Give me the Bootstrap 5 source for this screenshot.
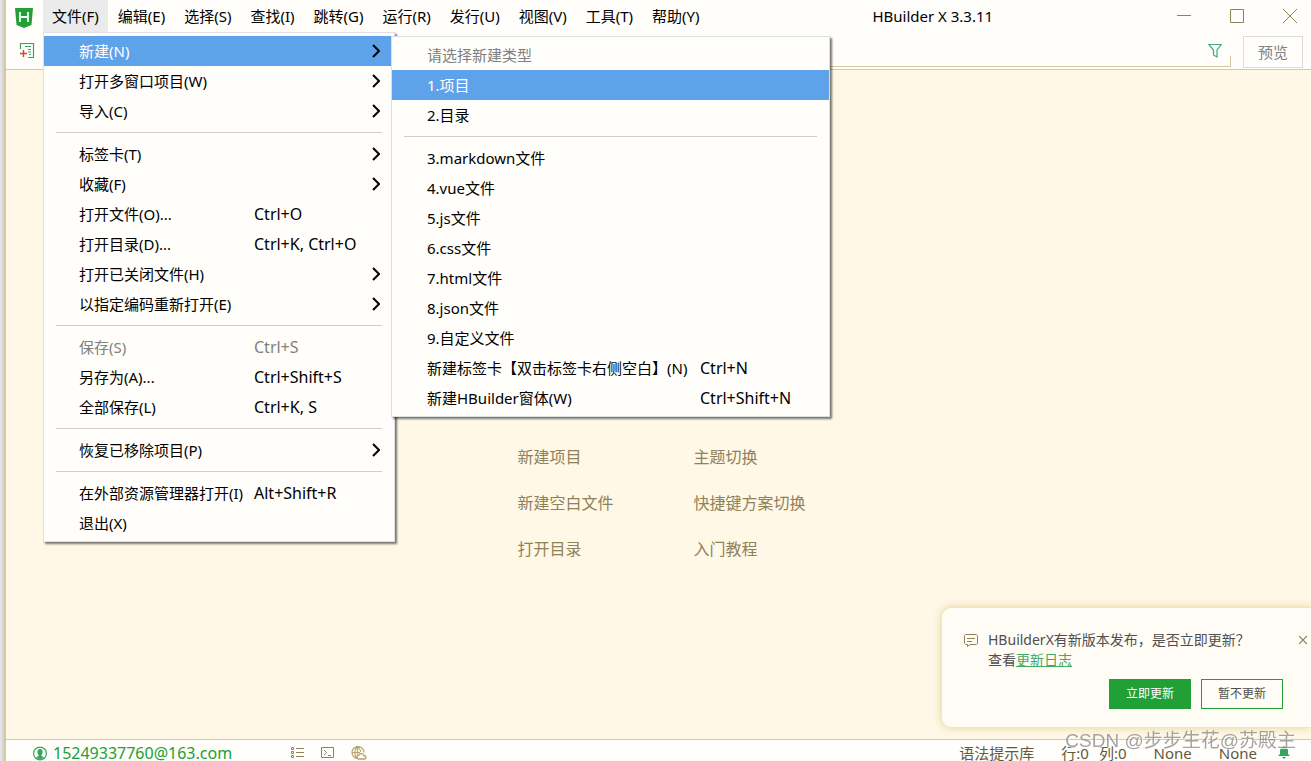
<!DOCTYPE html>
<html lang="zh-CN">
<head>
<meta charset="utf-8">
<meta name="viewport" content="width=device-width, initial-scale=1">
<title>HBuilder X 3.3.11</title>
<link href="https://cdn.jsdelivr.net/npm/bootstrap@5.3.0/dist/css/bootstrap.min.css" rel="stylesheet">
<style>
:root{--paper:#fffefa;--canvas:#fff8e7;--tan:#d5c9a0;--olive:#8f8158;--green:#20a036;--blue:#5ea2ea}
body{font-family:"Noto Sans","Noto Sans CJK SC",sans-serif;font-size:15px;line-height:20px;color:#000;background:var(--canvas)}
button{font-family:inherit}
.app-window{border-left:2px solid var(--tan)}
.desk-edge{width:4px;background:linear-gradient(90deg,#e9e9eb,#cfcfd2)}
.titlebar{height:33px;background:var(--paper)}
.logo-slot{width:37px;padding-left:9px}
.menu-row{gap:1px}
.menu-top{height:32px;padding:0 9px;border:0;background:none;color:#000;white-space:nowrap}
.menu-top.open{background:#ebebeb}
.caption{font-size:15px;line-height:32px}
.win-controls{margin-right:-5px}
.win-btn{width:53px;height:32px;border:0;background:none;padding:0 0 3px}
.toolbar{height:37px;background:var(--paper);border-bottom:1px solid var(--tan)}
.new-file{margin:10px 0 0 14px;overflow:visible}
.path-box{height:34px;border-bottom:1px solid var(--tan)}
.path-box::after{content:"";align-self:flex-end;width:1px;height:10px;background:var(--tan)}
.path-box input{border:0;background:none;outline:0;min-width:0}
.preview-btn{width:60px;height:32px;margin:3px 8px 0 12px;border:1px solid #dcdcdc;background:var(--paper);color:#808080;padding:0}
.popup{background:var(--paper);border:1px solid #dcdfe3;border-radius:0;padding:3px 0;margin:0;display:block;--bs-dropdown-min-width:0;font-size:15px;box-shadow:2px 2px 2px #0008}
.file-menu{top:32px;left:0;width:352px}
.new-menu{top:3px;left:347px;width:439px}
.popup .dropdown-item{height:30px;padding:0 0 0 35px;color:#000;line-height:30px;display:flex}
.popup .dropdown-item.active{background:var(--blue);color:#fff}
.popup .dropdown-item:disabled{color:#808080}
.popup .label-col{width:175px}
.popup .label-col+span{font-size:16px}
.new-menu .label-col{width:273px}
.popup .chev{margin:8px 14px 0 auto}
.popup .dropdown-divider{margin:6px 12px;border-top:1px solid #cfcfcf;opacity:1}
.start-area{padding-top:196px}
.start-grid{display:grid;grid-template-columns:176px 106px;grid-auto-rows:46px;align-items:center;white-space:nowrap;font-size:16px}
.start-grid a{color:var(--olive);text-decoration:none}
.notice{right:0;bottom:11px;width:370px;padding:22px 0 18px 22px;background:#fffcf5;border:1px solid #f1e5c0;border-right:0;border-radius:10px 0 0 10px;box-shadow:0 0 8px #e5d49a;font-size:14px;color:#4f4f4f}
.notice a{color:#41ab64}
.notice-text{padding-left:10px}
.notice-actions{gap:10px;margin-top:9px;padding-right:28px}
.notice .act{width:82px;height:30px;border:1px solid var(--green);border-radius:0;font-size:12px;padding:0}
.notice .act-main{background:var(--green);color:#fff}
.notice .act-alt{background:none;color:#4f4f4f}
.statusbar{height:22px;border-top:1px solid var(--tan);background:var(--paper);line-height:26px;color:#625a40}
.statusbar svg{margin-top:6px;flex:none}
.account{width:258px;margin-left:27px;gap:6px;font-size:16px;color:var(--green);text-decoration:none}
.panel-icons{gap:17px}
.status-info{gap:27px;padding-right:21px}
.status-info .bell{margin-left:-6px}
.cursor-pos{gap:10px}
.stamp{right:15px;bottom:4px;font-family:"Liberation Sans","Noto Sans CJK SC",sans-serif;font-size:19px;line-height:32px;color:#777a;text-shadow:1px 1px #fffc;pointer-events:none}
</style>
</head>
<body>
<div class="d-flex vh-100 overflow-hidden">
  <div class="desk-edge flex-shrink-0"></div>
  <div class="app-window d-flex flex-column flex-grow-1">
    <header class="titlebar d-flex align-items-start flex-shrink-0">
      <div class="logo-slot pt-2">
        <svg width="18" height="20" viewBox="0 0 18 20" class="d-block"><path d="M0 0h18l-1.500 17L9 20l-7.500-3z" fill="#20a036"/><path d="M5 4v10M13 4v10M5 9h8" stroke="#eef9ee" stroke-width="2" fill="none"/></svg>
      </div>
      <nav class="menu-row d-flex position-relative">
        <button class="menu-top open" type="button">文件(F)</button>
        <button class="menu-top" type="button">编辑(E)</button>
        <button class="menu-top" type="button">选择(S)</button>
        <button class="menu-top" type="button">查找(I)</button>
        <button class="menu-top" type="button">跳转(G)</button>
        <button class="menu-top" type="button">运行(R)</button>
        <button class="menu-top" type="button">发行(U)</button>
        <button class="menu-top" type="button">视图(V)</button>
        <button class="menu-top" type="button">工具(T)</button>
        <button class="menu-top" type="button">帮助(Y)</button>
        <div class="dropdown-menu popup file-menu">
          <button class="dropdown-item active" type="button"><span class="label-col">新建(N)</span><svg class="chev" width="8" height="14"><path d="M1 1l6 6-6 6" fill="none" stroke="#000" stroke-width="2"/></svg></button>
          <button class="dropdown-item" type="button"><span class="label-col">打开多窗口项目(W)</span><svg class="chev" width="8" height="14"><path d="M1 1l6 6-6 6" fill="none" stroke="#000" stroke-width="2"/></svg></button>
          <button class="dropdown-item" type="button"><span class="label-col">导入(C)</span><svg class="chev" width="8" height="14"><path d="M1 1l6 6-6 6" fill="none" stroke="#000" stroke-width="2"/></svg></button>
          <hr class="dropdown-divider">
          <button class="dropdown-item" type="button"><span class="label-col">标签卡(T)</span><svg class="chev" width="8" height="14"><path d="M1 1l6 6-6 6" fill="none" stroke="#000" stroke-width="2"/></svg></button>
          <button class="dropdown-item" type="button"><span class="label-col">收藏(F)</span><svg class="chev" width="8" height="14"><path d="M1 1l6 6-6 6" fill="none" stroke="#000" stroke-width="2"/></svg></button>
          <button class="dropdown-item" type="button"><span class="label-col">打开文件(O)...</span><span>Ctrl+O</span></button>
          <button class="dropdown-item" type="button"><span class="label-col">打开目录(D)...</span><span>Ctrl+K, Ctrl+O</span></button>
          <button class="dropdown-item" type="button"><span class="label-col">打开已关闭文件(H)</span><svg class="chev" width="8" height="14"><path d="M1 1l6 6-6 6" fill="none" stroke="#000" stroke-width="2"/></svg></button>
          <button class="dropdown-item" type="button"><span class="label-col">以指定编码重新打开(E)</span><svg class="chev" width="8" height="14"><path d="M1 1l6 6-6 6" fill="none" stroke="#000" stroke-width="2"/></svg></button>
          <hr class="dropdown-divider">
          <button class="dropdown-item" type="button" disabled><span class="label-col">保存(S)</span><span>Ctrl+S</span></button>
          <button class="dropdown-item" type="button"><span class="label-col">另存为(A)...</span><span>Ctrl+Shift+S</span></button>
          <button class="dropdown-item" type="button"><span class="label-col">全部保存(L)</span><span>Ctrl+K, S</span></button>
          <hr class="dropdown-divider">
          <button class="dropdown-item" type="button"><span class="label-col">恢复已移除项目(P)</span><svg class="chev" width="8" height="14"><path d="M1 1l6 6-6 6" fill="none" stroke="#000" stroke-width="2"/></svg></button>
          <hr class="dropdown-divider">
          <button class="dropdown-item" type="button"><span class="label-col">在外部资源管理器打开(I)</span><span>Alt+Shift+R</span></button>
          <button class="dropdown-item" type="button"><span class="label-col">退出(X)</span></button>
          <div class="dropdown-menu popup new-menu">
            <button class="dropdown-item" type="button" disabled>请选择新建类型</button>
            <button class="dropdown-item active" type="button">1.项目</button>
            <button class="dropdown-item" type="button">2.目录</button>
            <hr class="dropdown-divider">
            <button class="dropdown-item" type="button">3.markdown文件</button>
            <button class="dropdown-item" type="button">4.vue文件</button>
            <button class="dropdown-item" type="button">5.js文件</button>
            <button class="dropdown-item" type="button">6.css文件</button>
            <button class="dropdown-item" type="button">7.html文件</button>
            <button class="dropdown-item" type="button">8.json文件</button>
            <button class="dropdown-item" type="button">9.自定义文件</button>
            <button class="dropdown-item" type="button"><span class="label-col">新建标签卡【双击标签卡右侧空白】(N)</span><span>Ctrl+N</span></button>
            <button class="dropdown-item" type="button"><span class="label-col">新建HBuilder窗体(W)</span><span>Ctrl+Shift+N</span></button>
          </div>
        </div>
      </nav>
      <div class="caption flex-grow-1 text-center">HBuilder X 3.3.11</div>
      <div class="win-controls d-flex">
        <button class="win-btn" type="button" aria-label="最小化"><svg width="14" height="14"><path d="M0 6.500h14" stroke="#8f8158"/></svg></button>
        <button class="win-btn" type="button" aria-label="最大化"><svg width="14" height="14"><path d="M.5.5h13v13H.5z" fill="none" stroke="#8f8158"/></svg></button>
        <button class="win-btn" type="button" aria-label="关闭"><svg width="14" height="14"><path d="M0 0l14 14M14 0L0 14" stroke="#8f8158"/></svg></button>
      </div>
    </header>
    <div class="toolbar d-flex flex-shrink-0">
      <svg class="new-file flex-shrink-0" width="15" height="15"><path d="M.5 6V.5h13v14H8" fill="none" stroke="#3aa45f" stroke-width="1.200"/><path d="M5 3.500h6M8 6.500h3M8 9h3M9 11.500h2" stroke="#3aa45f" stroke-width="1.200"/><path d="M0 10.500h7M3.500 7v7" stroke="#dc4030" stroke-width="1.400"/></svg>
      <div class="path-box d-flex flex-grow-1 ms-2">
        <input class="flex-grow-1" type="text" aria-label="搜索文件">
        <svg class="mt-2 me-2" width="14" height="20"><path d="M.7 3.500h12.600L9 9v7L5.500 14V9z" fill="none" stroke="#35ad83" stroke-width="1.200"/></svg>
      </div>
      <button class="preview-btn flex-shrink-0" type="button">预览</button>
    </div>
    <main class="flex-grow-1 position-relative">
      <div class="start-area d-flex justify-content-center align-items-center h-100">
        <div class="start-grid">
          <a href="#">新建项目</a><a href="#">主题切换</a>
          <a href="#">新建空白文件</a><a href="#">快捷键方案切换</a>
          <a href="#">打开目录</a><a href="#">入门教程</a>
        </div>
      </div>
      <section class="notice position-absolute">
        <div class="d-flex">
          <svg class="mt-1" width="14" height="13"><path d="M1.500.5h11l1 1v8l-1 1H6L3.500 12.500v-2h-2l-1-1v-8zM3 4.500h8M3 7.500h5" fill="none" stroke="#8f8158"/></svg>
          <div class="notice-text flex-grow-1">HBuilderX有新版本发布，是否立即更新？<br>查看<a href="#">更新日志</a></div>
          <button class="border-0 bg-transparent p-0 align-self-start me-1" type="button" aria-label="关闭通知"><svg class="d-block mt-1" width="8" height="12"><path d="M0 2l8 8M8 2l-8 8" stroke="#8f8158" stroke-width="1.200"/></svg></button>
        </div>
        <div class="notice-actions d-flex justify-content-end">
          <button class="act act-main" type="button">立即更新</button>
          <button class="act act-alt" type="button">暂不更新</button>
        </div>
      </section>
    </main>
    <footer class="statusbar d-flex overflow-hidden flex-shrink-0">
      <a class="account d-flex" href="#"><svg width="14" height="15" viewBox="0 0 14 15"><circle cx="7" cy="7.500" r="6.400" fill="none" stroke="#36a55b" stroke-width="1.200"/><ellipse cx="7" cy="6" rx="2.600" ry="3" fill="#36a55b"/><path d="M5.500 7h3v3l2.500 1.500a6 6 0 0 1-8 0L5.500 10z" fill="#36a55b"/></svg><span>15249337760@163.com</span></a>
      <div class="panel-icons d-flex">
        <svg width="13" height="15"><path d="M.5 1.500h2v2h-2zM.5 5.500h2v2h-2zM.5 9.500h2v2h-2zM5 2.500h8M5 6.500h8M5 10.500h8" fill="none" stroke="#8f8158"/></svg>
        <svg width="13" height="15"><path d="M.5 1.500h12v10H.5zM3 4l2.500 2.500L3 9M7 9.500h3" fill="none" stroke="#8f8158"/></svg>
        <svg width="16" height="15"><path d="M7 12.500a6 6 0 1 1 6-6M1 6.500h8M6.500.5v8M6.500.5C3 4 3 9 6 12.500M6.500.5Q10 3 9.500 6" fill="none" stroke="#b8a270" stroke-width="1.200"/><path d="M8 13a2 2 0 0 1 0-4 2.800 2.800 0 0 1 5.200.8 1.600 1.600 0 0 1 .3 3.200z" fill="#fffefa" stroke="#b8a270" stroke-width="1.400"/></svg>
      </div>
      <div class="status-info d-flex ms-auto"><span>语法提示库</span><span class="cursor-pos d-flex"><span>行:0</span><span>列:0</span></span><span>None</span><span>None</span><svg class="bell" width="12" height="14"><path d="M6 0l1 1c2 .5 3 2 3 4v3l2 2H0l2-2V5c0-2 1-3.500 3-4zM4 11h4L6 13z" fill="#36a55b"/></svg></div>
    </footer>
  </div>
</div>
<div class="stamp position-fixed">CSDN @步步生花@苏殿主</div>
<script src="https://cdn.jsdelivr.net/npm/bootstrap@5.3.0/dist/js/bootstrap.bundle.min.js"></script>
</body>
</html>
